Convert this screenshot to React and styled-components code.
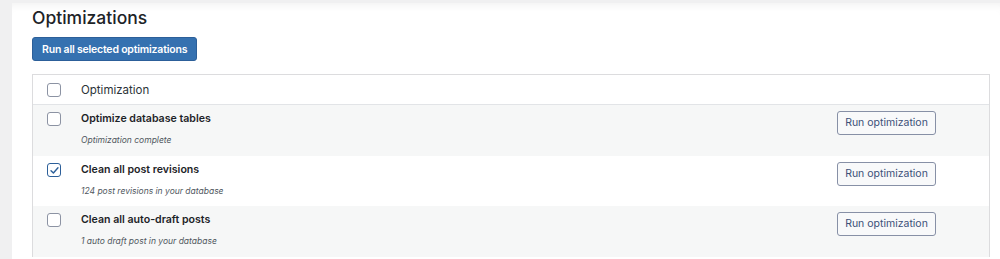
import React from "react";
import styled, { createGlobalStyle } from "styled-components";

const Global = createGlobalStyle`
  html, body { margin: 0; padding: 0; background: #f0f0f1; }
  body { font-family: Inter, "Noto Sans", sans-serif; color: #1d2327; }
  * { box-sizing: border-box; }
`;

const Page = styled.div`
  display: flex;
  height: 259px;
  overflow: hidden;
  padding-top: 3px;
  background: #f0f0f1;
`;

const Gutter = styled.div`
  width: 12px;
  flex: none;
`;

const Panel = styled.div`
  flex: 1;
  background: #ffffff;
  padding: 5px 10px 0 20px;
  box-shadow: inset 0 8px 8px -6px rgba(0, 0, 0, 0.06);
`;

const Title = styled.h2`
  margin: 0 0 10px;
  font-size: 17.5px;
  font-weight: 500;
  line-height: 19px;
  color: #1d2327;
`;

const PrimaryButton = styled.button`
  display: block;
  height: 24px;
  padding: 0 9px;
  border: 1px solid #2c5f99;
  border-radius: 3px;
  background: #3571b0;
  color: #ffffff;
  font-family: inherit;
  font-size: 10.5px;
  font-weight: 600;
  letter-spacing: -0.2px;
  margin-bottom: 13px;
`;

const Table = styled.div`
  border: 1px solid #dcdcde;
  border-bottom: none;
`;

const HeaderRow = styled.div`
  display: flex;
  align-items: center;
  height: 30px;
  border-bottom: 1px solid #e2e4e7;
  background: #ffffff;
`;

const Row = styled.div`
  display: flex;
  align-items: flex-start;
  height: ${(p) => (p.$tall ? 51 : 50)}px;
  background: ${(p) => (p.$alt ? "#f6f7f7" : "#ffffff")};
`;

const CheckCell = styled.div`
  width: 48px;
  flex: none;
  display: flex;
  justify-content: flex-start;
  padding-left: 14px;
  padding-top: ${(p) => (p.$header ? 0 : 7)}px;
`;

const Box = styled.span`
  width: 14px;
  height: 14px;
  border: 1px solid ${(p) => (p.$checked ? "#2c5f99" : "#8c93a3")};
  border-radius: 3px;
  background: #ffffff;
  display: flex;
  align-items: center;
  justify-content: center;
`;

const HeaderLabel = styled.span`
  font-size: 11.5px;
  color: #2c3338;
`;

const Body = styled.div`
  flex: 1;
  padding-top: 7px;
`;

const RowTitle = styled.div`
  font-size: 10.6px;
  font-weight: 600;
  line-height: 13px;
  color: #1d2327;
`;

const RowNote = styled.div`
  margin-top: 10px;
  font-size: 8.5px;
  font-style: italic;
  line-height: 11px;
  color: #50575e;
`;

const ActionCell = styled.div`
  width: 152px;
  flex: none;
  padding-top: 5px;
`;

const SecondaryButton = styled.button`
  height: 24px;
  width: 99px;
  padding: 0;
  border: 1px solid #8790a6;
  border-radius: 3px;
  background: #f8f9fa;
  color: #3b5078;
  font-family: inherit;
  font-size: 10.5px;
`;

const Check = () => (
  <svg width="11" height="11" viewBox="0 0 12 12" fill="none">
    <path d="M2.2 6.2 L4.8 8.8 L9.8 3" stroke="#2c5f99" strokeWidth="1.5" strokeLinecap="round" strokeLinejoin="round" />
  </svg>
);

const rows = [
  { title: "Optimize database tables", note: "Optimization complete", checked: false, alt: true },
  { title: "Clean all post revisions", note: "124 post revisions in your database", checked: true, alt: false },
  { title: "Clean all auto-draft posts", note: "1 auto draft post in your database", checked: false, alt: true },
];

export default function App() {
  return (
    <>
      <Global />
      <Page>
        <Gutter />
        <Panel>
          <Title>Optimizations</Title>
          <PrimaryButton>Run all selected optimizations</PrimaryButton>
          <Table>
            <HeaderRow>
              <CheckCell $header>
                <Box />
              </CheckCell>
              <HeaderLabel>Optimization</HeaderLabel>
            </HeaderRow>
            {rows.map((r, i) => (
              <Row key={i} $alt={r.alt} $tall={r.alt}>
                <CheckCell>
                  <Box $checked={r.checked}>{r.checked && <Check />}</Box>
                </CheckCell>
                <Body>
                  <RowTitle>{r.title}</RowTitle>
                  <RowNote>{r.note}</RowNote>
                </Body>
                <ActionCell>
                  <SecondaryButton>Run optimization</SecondaryButton>
                </ActionCell>
              </Row>
            ))}
          </Table>
        </Panel>
      </Page>
    </>
  );
}
